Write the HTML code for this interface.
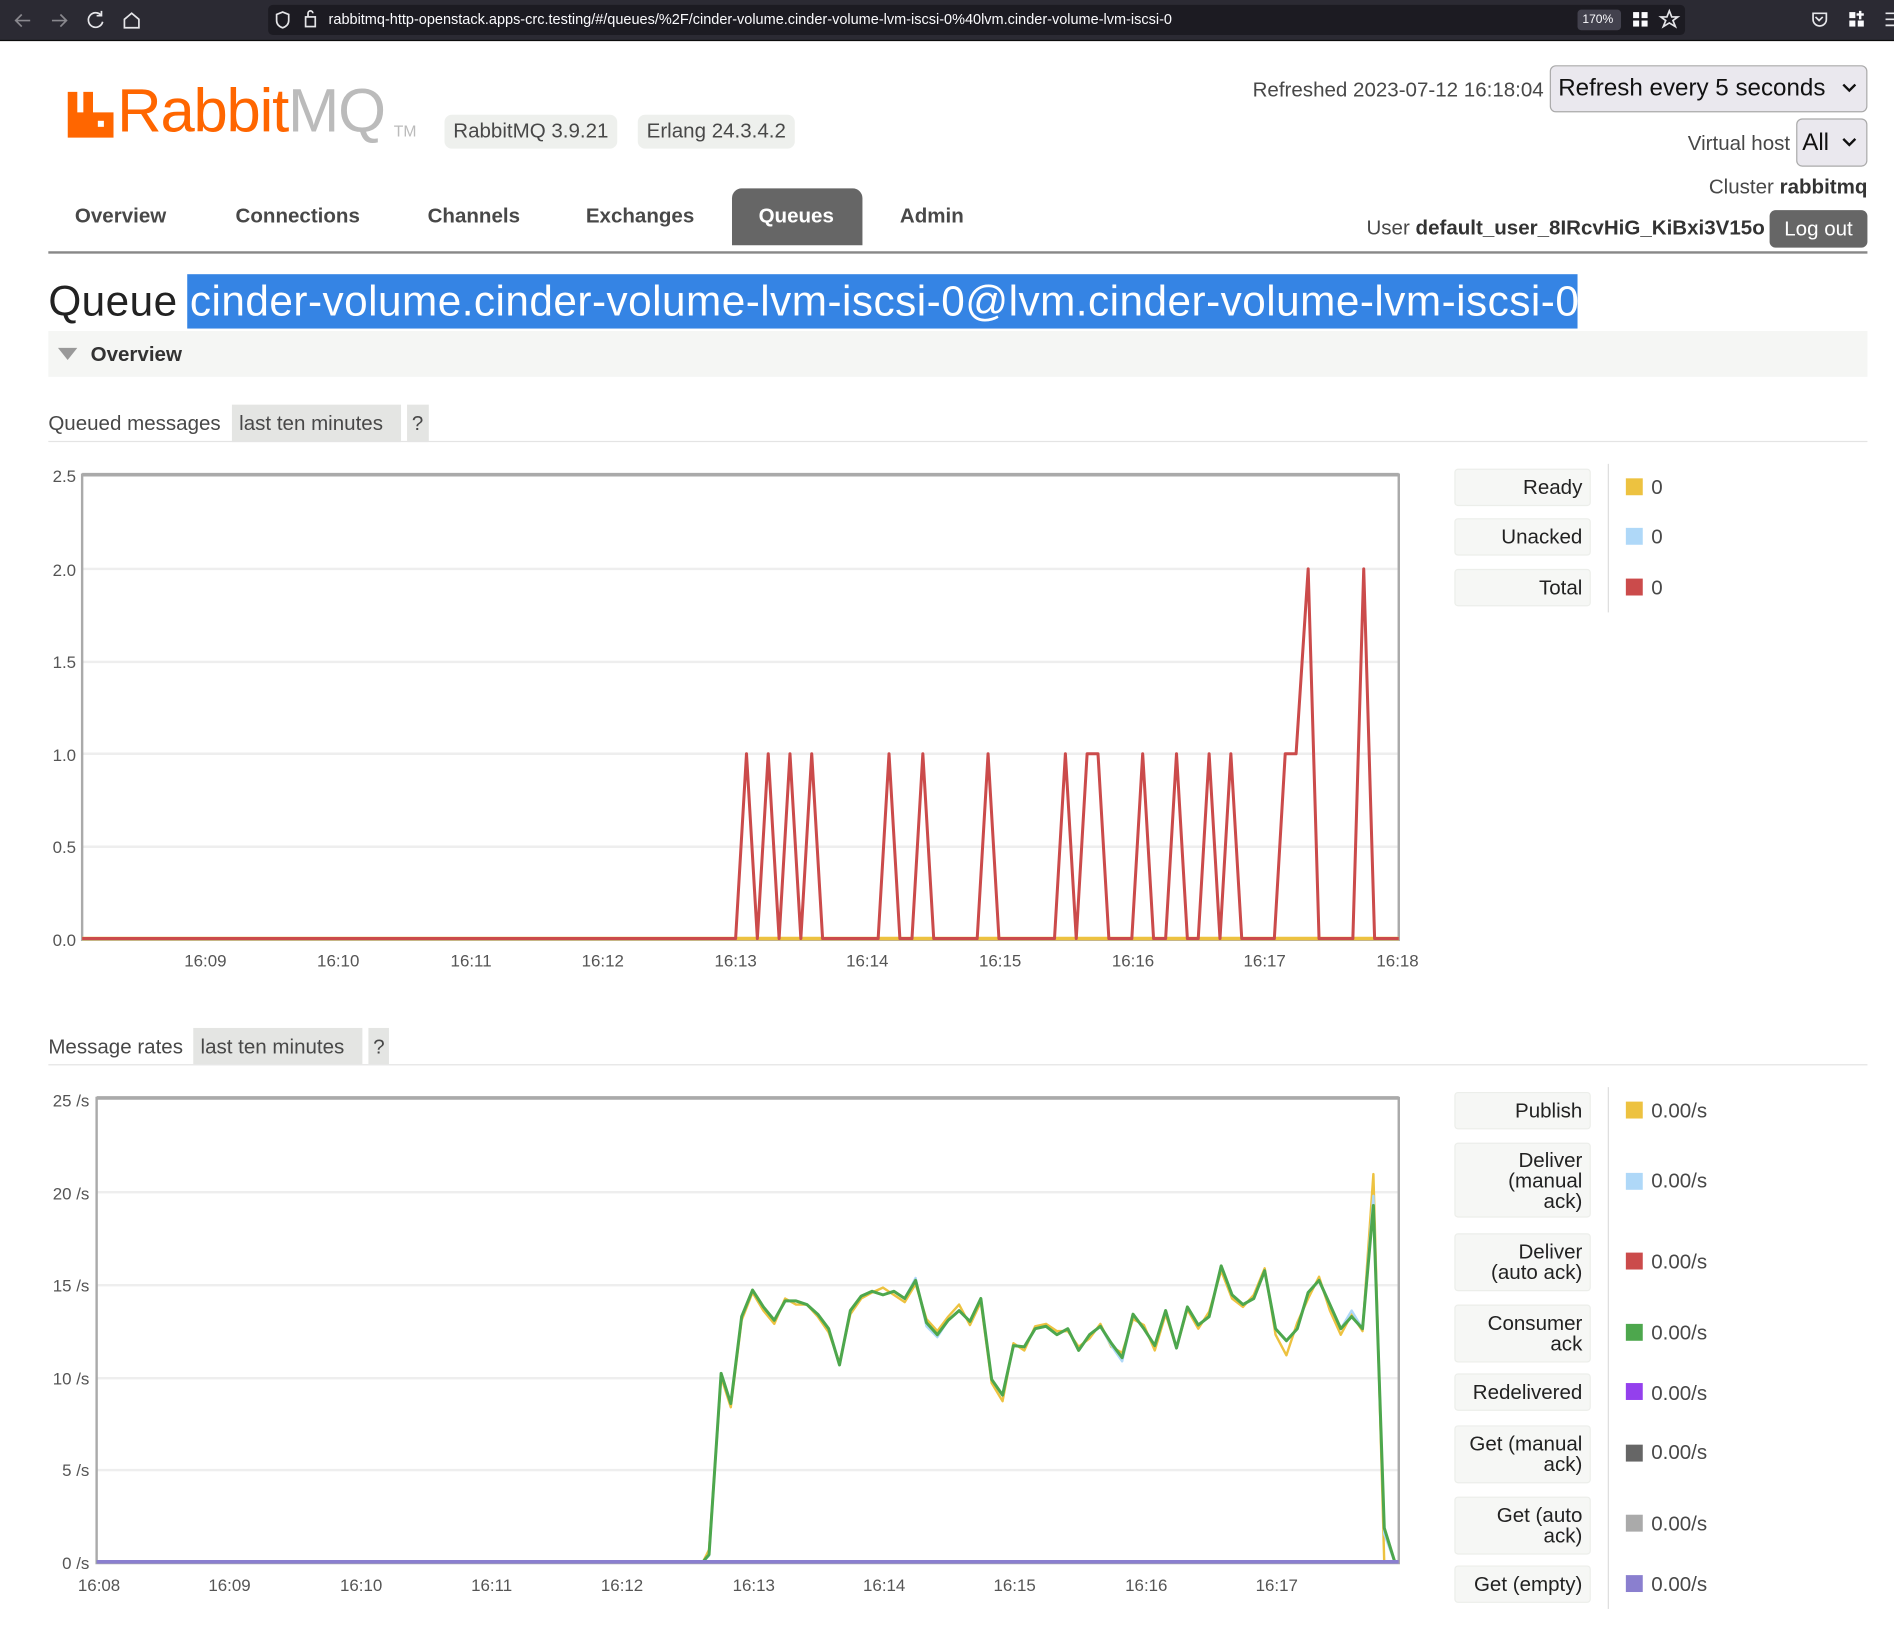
<!DOCTYPE html>
<html><head><meta charset="utf-8">
<style>
html,body{margin:0;padding:0;width:1894px;height:1634px;overflow:hidden;background:#fff}
#w{position:absolute;left:0;top:0;width:1568px;height:1353px;transform:scale(1.20791);transform-origin:0 0;font-family:"Liberation Sans",sans-serif;color:#484848}
.a{position:absolute;white-space:nowrap}
.bar{left:0;top:0;width:1568px;height:33px;background:#2b2a33;border-bottom:1px solid #0c0c0d}
.url{left:222px;top:4px;width:1173px;height:25px;background:#1c1b22;border-radius:4px}
.badge{background:#eef0ed;border-radius:6px;font-size:17px;color:#484848;text-align:center;line-height:28px;height:28px}
.tab{font-size:17px;font-weight:bold;color:#484848;top:169px}
.lbl{background:#f6f7f5;border:1px solid #eceeea;border-radius:3px;text-align:right;font-size:17px;color:#222;box-sizing:border-box;padding-right:6px;left:1204px;width:113px;line-height:17px;display:flex;align-items:center;justify-content:flex-end;white-space:nowrap}
.sw{left:1346px;width:14px;height:14px}
.val{left:1367px;font-size:17px;color:#484848}
</style></head><body><div id="w">
<div class="a bar"></div>
<div class="a url"></div>
<svg class="a" style="left:0;top:0" width="1568" height="33">
<g stroke="#fbfbfe" fill="none" stroke-width="1.4" opacity=".9">
<path d="M25 17H13M18 12l-5 5 5 5" opacity=".5"/><path d="M43 17h12M50 12l5 5-5 5" opacity=".5"/>
<path d="M84 13a6 6 0 1 0 1 5M84 9v4h-4"/><path d="M103 16l6-5 6 5v7h-12z"/>
<path d="M234 10l5 2v5c0 3-2 5-5 6-3-1-5-3-5-6v-5z"/><rect x="253" y="14" width="8" height="8"/><path d="M255 14v-3a2 2 0 0 1 4 0"/>
<path d="M1382 9l2 5h5l-4 3 2 5-5-3-5 3 2-5-4-3h5z"/>
<path d="M1501 11h11v5a5.5 5.5 0 0 1-11 0z"/><path d="M1503 14l3 3 3-3"/>
<path d="M1561 11h7M1561 16h7M1561 21h7"/></g>
<g fill="#fbfbfe"><rect x="1352" y="10" width="5" height="5"/><rect x="1359" y="10" width="5" height="5"/><rect x="1352" y="17" width="5" height="5"/><rect x="1359" y="17" width="5" height="5"/>
<rect x="1531" y="10" width="5" height="5"/><rect x="1531" y="17" width="5" height="5"/><rect x="1538" y="17" width="5" height="5"/><rect x="1539" y="9" width="2" height="7"/><rect x="1537" y="11" width="6" height="2"/></g>
<rect x="1306" y="8" width="36" height="17" rx="3" fill="#42414d"/>
</svg>
<div class="a" style="left:272px;top:9px;font-size:12px;color:#fbfbfe">rabbitmq-http-openstack.apps-crc.testing/#/queues/%2F/cinder-volume.cinder-volume-lvm-iscsi-0%40lvm.cinder-volume-lvm-iscsi-0</div>
<div class="a" style="left:1310px;top:11px;font-size:10px;color:#fbfbfe">170%</div>

<svg class="a" style="left:56px;top:76px" width="38" height="38"><path fill="#f60" d="M0 0h8v17h5V0h8v17h17v21H0z"/><rect x="25" y="24" width="5" height="5" fill="#fff"/></svg>
<div class="a" style="left:97px;top:62px;font-size:51px;color:#f60;letter-spacing:-1px">Rabbit<span style="color:#bbb">MQ</span></div>
<div class="a" style="left:326px;top:101px;font-size:13px;color:#bbb">TM</div>
<div class="a badge" style="left:368px;top:95px;width:143px">RabbitMQ 3.9.21</div>
<div class="a badge" style="left:528px;top:95px;width:130px">Erlang 24.3.4.2</div>

<div class="a" style="right:290px;top:65px;font-size:17px">Refreshed 2023-07-12 16:18:04</div>
<div class="a" style="left:1283px;top:54px;width:261px;height:37px;background:#eae8ee;border:1px solid #aaa;border-radius:5px"></div>
<div class="a" style="left:1290px;top:62px;font-size:20px;color:#111">Refresh every 5 seconds</div>
<svg class="a" style="left:1524px;top:68px" width="14" height="10"><path d="M2 2l5 5 5-5" stroke="#111" stroke-width="2" fill="none"/></svg>
<div class="a" style="right:86px;top:109px;font-size:17px">Virtual host</div>
<div class="a" style="left:1487px;top:98px;width:57px;height:38px;background:#eae8ee;border:1px solid #aaa;border-radius:5px"></div>
<div class="a" style="left:1492px;top:107px;font-size:20px;color:#111">All</div>
<svg class="a" style="left:1524px;top:113px" width="14" height="10"><path d="M2 2l5 5 5-5" stroke="#111" stroke-width="2" fill="none"/></svg>
<div class="a" style="right:22px;top:145px;font-size:17px">Cluster <b style="color:#333">rabbitmq</b></div>
<div class="a" style="right:107px;top:179px;font-size:17px">User <b style="color:#333">default_user_8IRcvHiG_KiBxi3V15o</b></div>
<div class="a" style="left:1465px;top:174px;width:81px;height:31px;background:#666;border-radius:5px;color:#fff;font-size:17px;text-align:center;line-height:31px">Log out</div>

<div class="a tab" style="left:62px">Overview</div>
<div class="a tab" style="left:195px">Connections</div>
<div class="a tab" style="left:354px">Channels</div>
<div class="a tab" style="left:485px">Exchanges</div>
<div class="a" style="left:606px;top:156px;width:108px;height:47px;background:#666;border-radius:8px 8px 0 0"></div>
<div class="a tab" style="left:628px;color:#fff">Queues</div>
<div class="a tab" style="left:745px">Admin</div>
<div class="a" style="left:40px;top:208px;width:1506px;height:2px;background:#888"></div>

<div class="a" style="left:155px;top:227px;width:1151px;height:45px;background:#3584e4"></div>
<div class="a" style="left:40px;top:230px;font-size:35px;color:#222;letter-spacing:0.4px">Queue <span style="color:#fff">cinder-volume.cinder-volume-lvm-iscsi-0@lvm.cinder-volume-lvm-iscsi-0</span></div>
<div class="a" style="left:40px;top:274px;width:1506px;height:38px;background:#f5f6f4"></div>
<svg class="a" style="left:48px;top:287px" width="16" height="12"><path d="M0 1h16L8 11z" fill="#999"/></svg>
<div class="a" style="left:75px;top:284px;font-size:17px;font-weight:bold;color:#333">Overview</div>

<div class="a" style="left:40px;top:341px;font-size:17px">Queued messages</div>
<div class="a" style="left:192px;top:335px;width:140px;height:31px;background:#e4e5e3"></div>
<div class="a" style="left:198px;top:341px;font-size:17px">last ten minutes</div>
<div class="a" style="left:337px;top:335px;width:18px;height:31px;background:#e4e5e3"></div>
<div class="a" style="left:341px;top:341px;font-size:17px">?</div>
<div class="a" style="left:40px;top:365px;width:1506px;height:1px;background:#e4e4e4"></div>

<svg class="a" style="left:0;top:380px" width="1200" height="430">
<g transform="translate(0,-380)">
<g stroke="#eee" stroke-width="2"><path d="M68 471H1158M68 548H1158M68 624H1158M68 701H1158"/></g>
<rect x="68" y="393" width="1090" height="385" fill="none" stroke="#aaa" stroke-width="2"/>
<path d="M68 393H1158" stroke="#aaa" stroke-width="3"/>
<path d="M68 777H1158" stroke="#edc240" stroke-width="3"/>
<polyline fill="none" stroke="#cb4b4b" stroke-width="2.5" stroke-linejoin="round" points="68,777 609,777 618,624 627,777 636,624 645,777 654,624 663,777 672,624 681,777 727,777 736,624 745,777 755,777 764,624 773,777 809,777 818,624 827,777 873,777 882,624 891,777 900,624 909,624 918,777 937,777 946,624 955,777 965,777 974,624 983,777 992,777 1001,624 1010,777 1019,624 1028,777 1055,777 1064,624 1073,624 1083,471 1092,777 1120,777 1129,471 1138,777 1158,777"/>
<g font-size="14" fill="#555" font-family="Liberation Sans,sans-serif" text-anchor="end">
<text x="63" y="399">2.5</text><text x="63" y="477">2.0</text><text x="63" y="553">1.5</text><text x="63" y="630">1.0</text><text x="63" y="706">0.5</text><text x="63" y="783">0.0</text></g>
<g font-size="14" fill="#555" font-family="Liberation Sans,sans-serif" text-anchor="middle">
<text x="170" y="800">16:09</text><text x="280" y="800">16:10</text><text x="390" y="800">16:11</text><text x="499" y="800">16:12</text><text x="609" y="800">16:13</text><text x="718" y="800">16:14</text><text x="828" y="800">16:15</text><text x="938" y="800">16:16</text><text x="1047" y="800">16:17</text><text x="1157" y="800">16:18</text></g>
</g></svg>

<div class="a" style="left:1331px;top:384px;width:1px;height:123px;background:#ddd"></div>
<div class="a lbl" style="top:388px;height:31px">Ready</div>
<div class="a lbl" style="top:429px;height:31px">Unacked</div>
<div class="a lbl" style="top:471px;height:31px">Total</div>
<div class="a sw" style="top:396px;background:#edc240"></div><div class="a val" style="top:394px">0</div>
<div class="a sw" style="top:437px;background:#afd8f8"></div><div class="a val" style="top:435px">0</div>
<div class="a sw" style="top:479px;background:#cb4b4b"></div><div class="a val" style="top:477px">0</div>

<div class="a" style="left:40px;top:857px;font-size:17px">Message rates</div>
<div class="a" style="left:160px;top:851px;width:140px;height:30px;background:#e4e5e3"></div>
<div class="a" style="left:166px;top:857px;font-size:17px">last ten minutes</div>
<div class="a" style="left:305px;top:851px;width:17px;height:30px;background:#e4e5e3"></div>
<div class="a" style="left:309px;top:857px;font-size:17px">?</div>
<div class="a" style="left:40px;top:881px;width:1506px;height:1px;background:#e4e4e4"></div>

<svg class="a" style="left:0;top:0" width="1200" height="1353">
<g stroke="#eee" stroke-width="2"><path d="M80 987H1158M80 1064H1158M80 1141H1158M80 1217H1158"/></g>
<rect x="80" y="909" width="1078" height="385" fill="none" stroke="#aaa" stroke-width="2"/>
<path d="M80 909H1158" stroke="#aaa" stroke-width="3"/>
<polyline fill="none" stroke="#edc240" stroke-width="2" stroke-linejoin="round" points="80,1293 582,1293 587,1283 597,1140 605,1165 614,1093 623,1070 632,1085 641,1096 650,1075 659,1080 668,1080 677,1090 686,1103 695,1128 704,1088 713,1075 722,1070 731,1066 740,1072 749,1078 758,1063 767,1092 776,1102 785,1090 794,1080 803,1097 812,1078 821,1145 830,1160 839,1112 848,1118 857,1098 866,1096 875,1102 884,1102 893,1115 902,1108 911,1096 920,1115 929,1120 938,1092 947,1097 956,1118 965,1088 974,1116 983,1084 992,1100 1001,1086 1011,1052 1020,1075 1029,1082 1038,1072 1047,1050 1056,1105 1065,1122 1074,1095 1083,1075 1092,1057 1101,1085 1110,1105 1119,1088 1128,1102 1137,972 1146,1294"/>
<polyline fill="none" stroke="#afd8f8" stroke-width="2" stroke-linejoin="round" points="80,1293 582,1293 587,1288 597,1137 605,1162 614,1090 623,1068 632,1082 641,1093 650,1077 659,1077 668,1080 677,1088 686,1100 695,1130 704,1085 713,1073 722,1069 731,1072 740,1069 749,1075 758,1058 767,1098 776,1107 785,1093 794,1085 803,1094 812,1075 821,1142 830,1155 839,1114 848,1115 857,1100 866,1098 875,1105 884,1100 893,1118 902,1105 911,1098 920,1114 929,1127 938,1088 947,1100 956,1114 965,1085 974,1116 983,1082 992,1097 1001,1090 1011,1048 1020,1072 1029,1080 1038,1075 1047,1052 1056,1100 1065,1110 1074,1100 1083,1070 1092,1060 1101,1080 1110,1100 1119,1085 1128,1100 1137,990 1146,1270 1155,1294"/>
<polyline fill="none" stroke="#4da74d" stroke-width="2.5" stroke-linejoin="round" points="80,1293 582,1293 587,1287 597,1137 605,1162 614,1090 623,1068 632,1082 641,1093 650,1077 659,1077 668,1080 677,1088 686,1100 695,1130 704,1085 713,1073 722,1069 731,1072 740,1069 749,1075 758,1060 767,1095 776,1105 785,1093 794,1085 803,1094 812,1075 821,1142 830,1155 839,1114 848,1115 857,1100 866,1098 875,1105 884,1100 893,1118 902,1105 911,1098 920,1112 929,1124 938,1088 947,1100 956,1114 965,1085 974,1116 983,1082 992,1097 1001,1090 1011,1048 1020,1072 1029,1080 1038,1075 1047,1052 1056,1100 1065,1110 1074,1100 1083,1070 1092,1060 1101,1080 1110,1100 1119,1090 1128,1100 1137,998 1146,1265 1155,1294"/>
<path d="M80 1293H1158" stroke="#8a7fcf" stroke-width="3"/>
<g font-size="14" fill="#555" font-family="Liberation Sans,sans-serif" text-anchor="end">
<text x="74" y="916">25 /s</text><text x="74" y="993">20 /s</text><text x="74" y="1069">15 /s</text><text x="74" y="1146">10 /s</text><text x="74" y="1222">5 /s</text><text x="74" y="1299">0 /s</text></g>
<g font-size="14" fill="#555" font-family="Liberation Sans,sans-serif" text-anchor="middle">
<text x="82" y="1317">16:08</text><text x="190" y="1317">16:09</text><text x="299" y="1317">16:10</text><text x="407" y="1317">16:11</text><text x="515" y="1317">16:12</text><text x="624" y="1317">16:13</text><text x="732" y="1317">16:14</text><text x="840" y="1317">16:15</text><text x="949" y="1317">16:16</text><text x="1057" y="1317">16:17</text></g>
</svg>

<div class="a" style="left:1331px;top:900px;width:1px;height:432px;background:#ddd"></div>
<div class="a lbl" style="top:904px;height:31px">Publish</div>
<div class="a lbl" style="top:946px;height:62px;text-align:right"><span>Deliver<br>(manual<br>ack)</span></div>
<div class="a lbl" style="top:1021px;height:48px;text-align:right"><span>Deliver<br>(auto ack)</span></div>
<div class="a lbl" style="top:1080px;height:48px;text-align:right"><span>Consumer<br>ack</span></div>
<div class="a lbl" style="top:1137px;height:31px">Redelivered</div>
<div class="a lbl" style="top:1180px;height:48px;text-align:right"><span>Get (manual<br>ack)</span></div>
<div class="a lbl" style="top:1239px;height:48px;text-align:right"><span>Get (auto<br>ack)</span></div>
<div class="a lbl" style="top:1296px;height:31px">Get (empty)</div>
<div class="a sw" style="top:912px;background:#edc240"></div><div class="a val" style="top:910px">0.00/s</div>
<div class="a sw" style="top:971px;background:#afd8f8"></div><div class="a val" style="top:968px">0.00/s</div>
<div class="a sw" style="top:1037px;background:#cb4b4b"></div><div class="a val" style="top:1035px">0.00/s</div>
<div class="a sw" style="top:1096px;background:#4da74d"></div><div class="a val" style="top:1094px">0.00/s</div>
<div class="a sw" style="top:1145px;background:#9440ed"></div><div class="a val" style="top:1144px">0.00/s</div>
<div class="a sw" style="top:1196px;background:#666"></div><div class="a val" style="top:1193px">0.00/s</div>
<div class="a sw" style="top:1254px;background:#aaa"></div><div class="a val" style="top:1252px">0.00/s</div>
<div class="a sw" style="top:1304px;background:#8a7fcf"></div><div class="a val" style="top:1302px">0.00/s</div>
</div></body></html>
